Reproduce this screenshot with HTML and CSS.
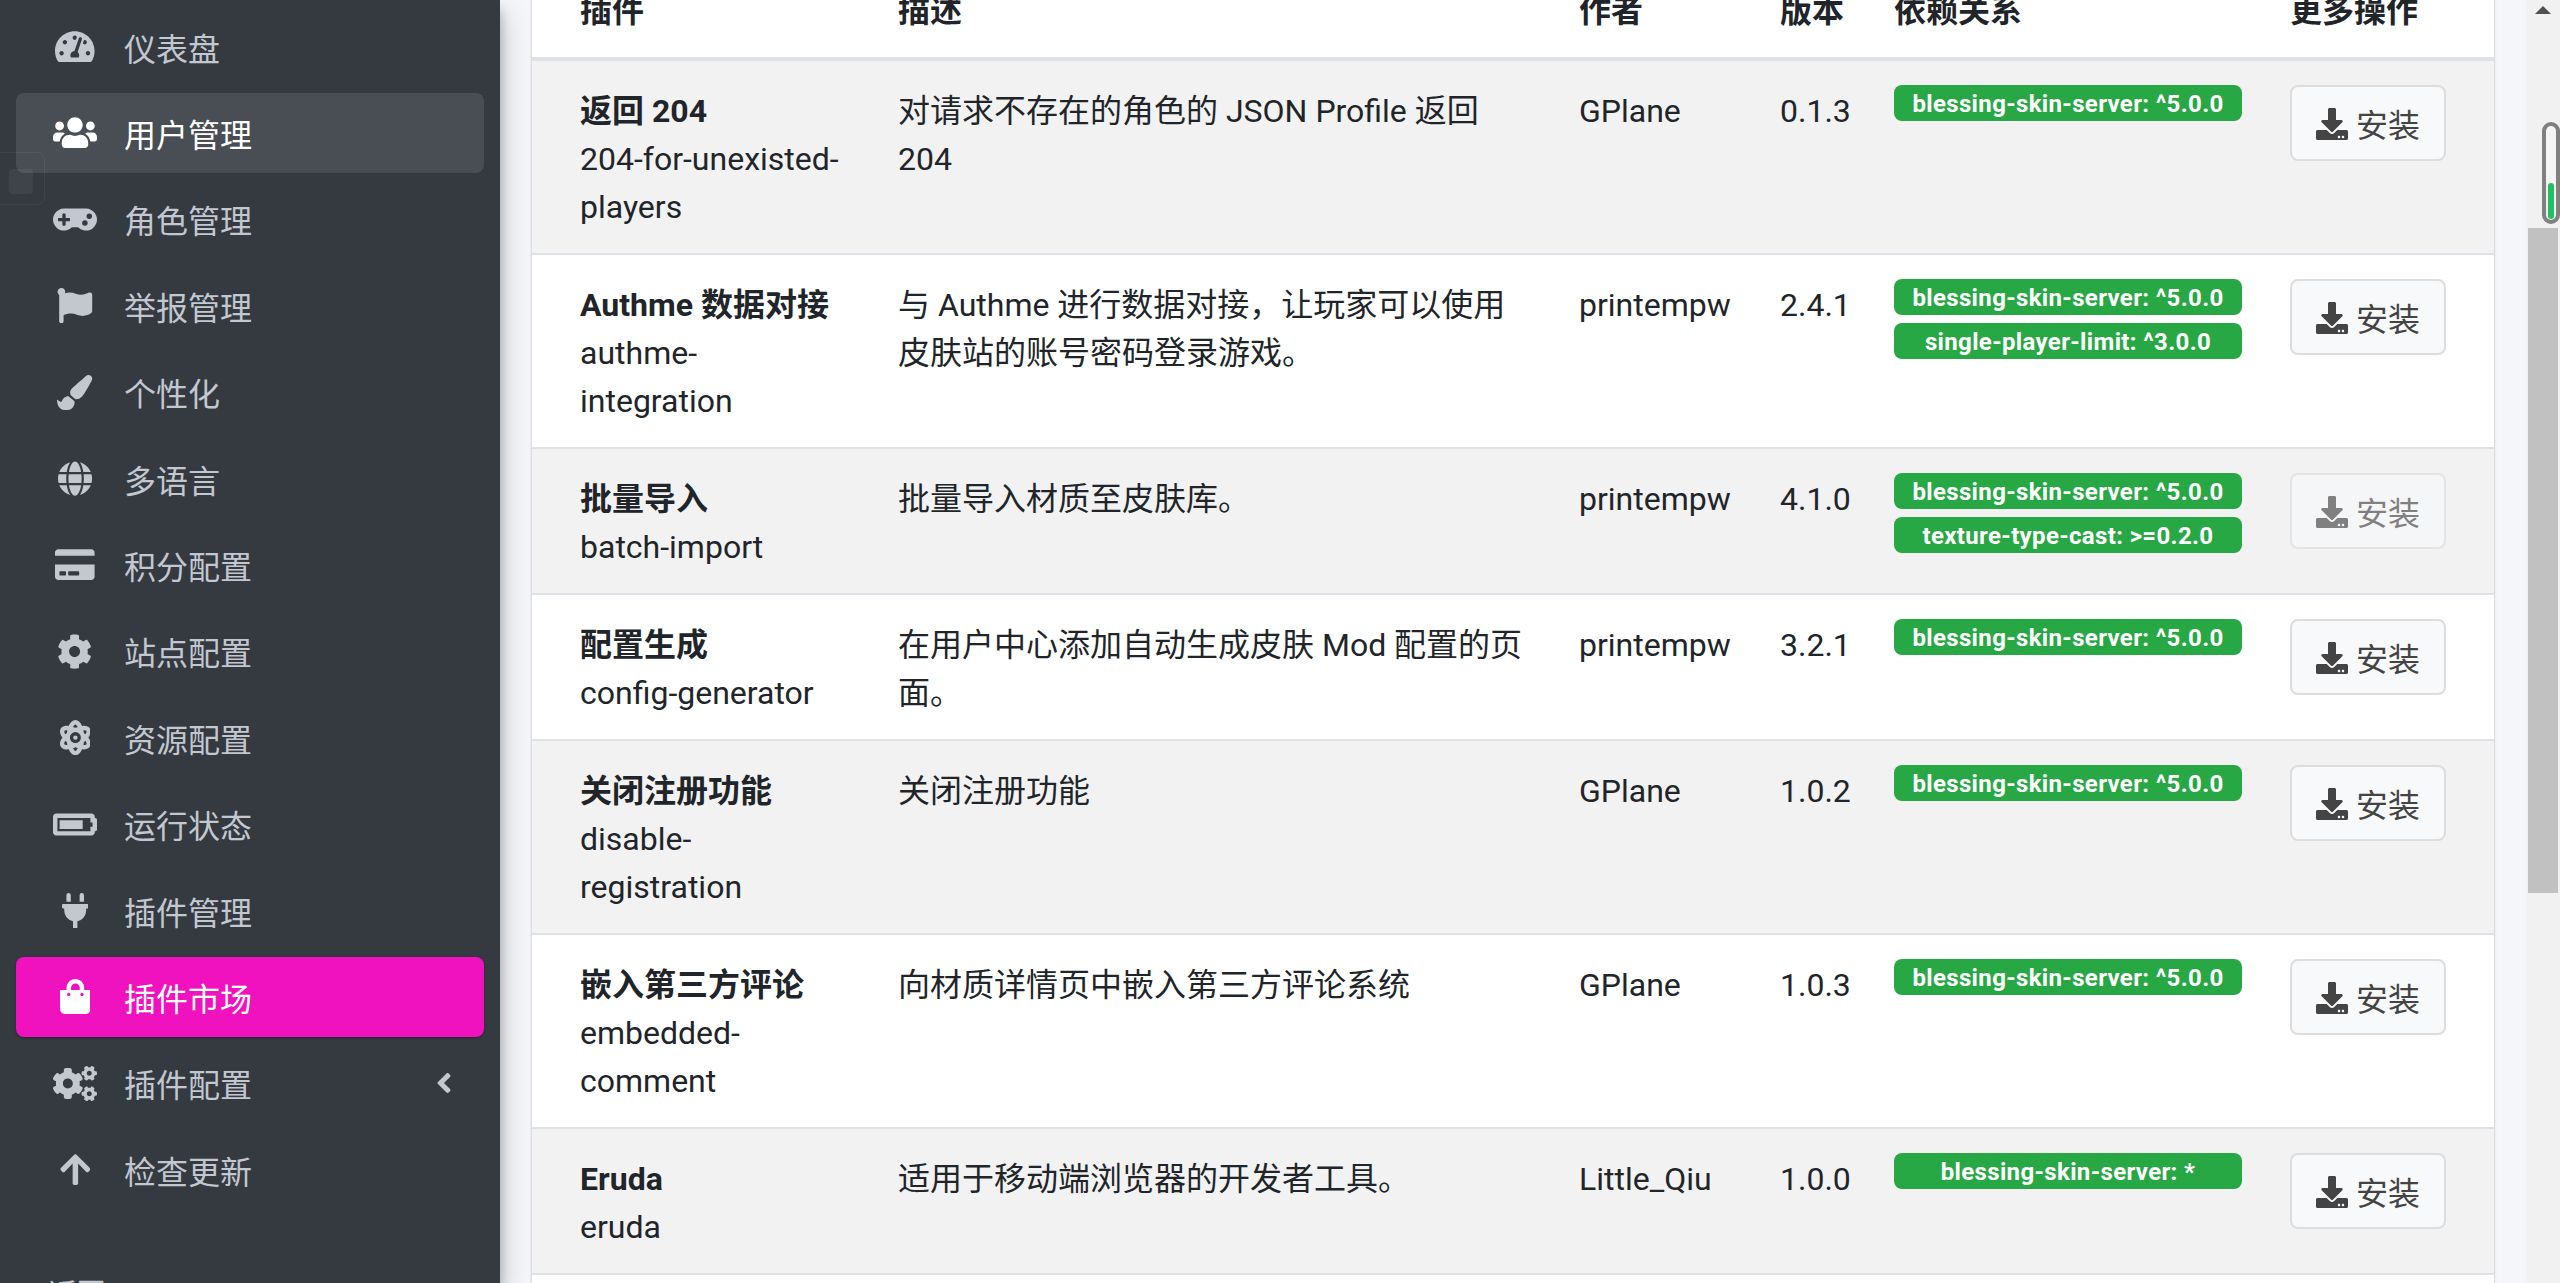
FILE: index.html
```html
<!DOCTYPE html>
<html lang="zh-CN">
<head>
    <meta charset="UTF-8">
    <title>插件市场</title>
    <link rel="stylesheet" href="styles.css">
</head>
<body>
    <svg class="sprite" aria-hidden="true">
        <symbol id="icon-download" viewBox="0 0 512 512"><path d="M216 0h80c13.3 0 24 10.7 24 24v168h87.7c17.8 0 26.7 21.5 14.1 34.1L269.7 378.3c-7.5 7.5-19.8 7.5-27.3 0L90.1 226.1c-12.6-12.6-3.7-34.1 14.1-34.1H192V24c0-13.3 10.7-24 24-24zm296 376v112c0 13.3-10.7 24-24 24H24c-13.3 0-24-10.7-24-24V376c0-13.3 10.7-24 24-24h146.7l49 49c20.1 20.1 52.5 20.1 72.6 0l49-49H488c13.3 0 24 10.7 24 24zm-124 88c0-11-9-20-20-20s-20 9-20 20 9 20 20 20 20-9 20-20zm64 0c0-11-9-20-20-20s-20 9-20 20 9 20 20 20 20-9 20-20z"/></symbol>
    </svg>

    <aside class="sidebar">
        <nav class="nav">
            <a class="nav-link"><span class="nav-icon"><svg viewBox="0 0 576 512"><path d="M288 32C128.94 32 0 160.94 0 320c0 52.8 14.25 102.26 39.06 144.8 5.61 9.62 16.3 15.2 27.44 15.2h443c11.14 0 21.83-5.58 27.44-15.2C561.75 422.26 576 372.8 576 320c0-159.06-128.94-288-288-288zm0 64c14.71 0 26.58 10.13 30.32 23.65-1.11 2.26-2.64 4.23-3.45 6.67l-9.22 27.67c-5.13 3.49-10.97 6.01-17.64 6.01-17.67 0-32-14.33-32-32S270.33 96 288 96zM96 384c-17.67 0-32-14.33-32-32s14.33-32 32-32 32 14.33 32 32-14.33 32-32 32zm48-160c-17.67 0-32-14.33-32-32s14.33-32 32-32 32 14.33 32 32-14.33 32-32 32zm246.77-72.41l-61.33 184C343.13 347.33 352 364.54 352 384c0 11.72-3.38 22.55-8.88 32H232.88c-5.5-9.45-8.88-20.28-8.88-32 0-33.94 26.5-61.43 59.9-63.59l61.34-184.01c4.17-12.56 17.73-19.45 30.36-15.17 12.57 4.19 19.35 17.79 15.17 30.36zm14.66 57.2l15.52-46.55c3.47-1.29 7.13-2.23 11.05-2.23 17.67 0 32 14.33 32 32s-14.33 32-32 32c-11.38-.01-20.89-6.28-26.57-15.22zM480 384c-17.67 0-32-14.33-32-32s14.33-32 32-32 32 14.33 32 32-14.33 32-32 32z"/></svg></span>仪表盘</a>
            <a class="nav-link hover"><span class="nav-icon"><svg viewBox="0 0 640 512"><path d="M96 224c35.3 0 64-28.7 64-64s-28.7-64-64-64-64 28.7-64 64 28.7 64 64 64zm448 0c35.3 0 64-28.7 64-64s-28.7-64-64-64-64 28.7-64 64 28.7 64 64 64zm32 32h-64c-17.6 0-33.5 7.1-45.1 18.6 40.3 22.1 68.9 62 75.1 109.4h66c17.7 0 32-14.3 32-32v-32c0-35.3-28.7-64-64-64zm-256 0c61.9 0 112-50.1 112-112S381.9 32 320 32 208 82.1 208 144s50.1 112 112 112zm76.8 32h-8.3c-20.8 10-43.9 16-68.5 16s-47.6-6-68.5-16h-8.3C179.6 288 128 339.6 128 403.2V432c0 26.5 21.5 48 48 48h288c26.5 0 48-21.5 48-48v-28.8c0-63.6-51.6-115.2-115.2-115.2zm-223.7-13.4C161.5 263.1 145.6 256 128 256H64c-35.3 0-64 28.7-64 64v32c0 17.7 14.3 32 32 32h65.9c6.3-47.4 34.9-87.3 75.2-109.4z"/></svg></span>用户管理</a>
            <a class="nav-link"><span class="nav-icon"><svg viewBox="0 0 640 512"><path d="M480.07 96H160a160 160 0 1 0 114.24 272h91.52A160 160 0 1 0 480.07 96zM248 268a12 12 0 0 1-12 12h-52v52a12 12 0 0 1-12 12h-24a12 12 0 0 1-12-12v-52H84a12 12 0 0 1-12-12v-24a12 12 0 0 1 12-12h52v-52a12 12 0 0 1 12-12h24a12 12 0 0 1 12 12v52h52a12 12 0 0 1 12 12zm216 76a40 40 0 1 1 40-40 40 40 0 0 1-40 40zm64-96a40 40 0 1 1 40-40 40 40 0 0 1-40 40z"/></svg></span>角色管理</a>
            <a class="nav-link"><span class="nav-icon"><svg viewBox="0 0 512 512"><path d="M349.565 98.783C295.978 98.783 251.721 64 184.348 64c-24.955 0-47.309 4.384-68.045 12.013a55.947 55.947 0 0 0 3.586-23.562C118.117 24.015 94.806 1.206 66.338.048 34.345-1.254 8 24.296 8 56c0 19.026 9.497 35.825 24 45.945V488c0 13.255 10.745 24 24 24h16c13.255 0 24-10.745 24-24v-94.4c28.311-12.064 63.582-22.122 114.435-22.122 53.588 0 97.844 34.783 165.217 34.783 48.169 0 86.667-16.294 122.505-40.858C506.84 359.452 512 349.571 512 339.045v-243.1c0-23.393-24.269-38.87-45.485-29.016-34.338 15.948-76.454 31.854-116.95 31.854z"/></svg></span>举报管理</a>
            <a class="nav-link"><span class="nav-icon"><svg viewBox="0 0 512 512"><path d="M167.02 309.34c-40.12 2.58-76.53 17.86-97.19 72.3-2.35 6.21-8 9.98-14.59 9.98-11.11 0-45.46-27.67-55.25-34.35C0 439.62 37.93 512 128 512c75.86 0 128-43.77 128-120.19 0-3.11-.65-6.08-.97-9.13l-88.01-73.34zM457.89 0c-15.16 0-29.37 6.71-40.21 16.45C213.27 199.05 192 203.34 192 257.09c0 13.7 3.25 26.76 8.73 38.7l63.82 53.18c7.21 1.8 14.64 3.03 22.39 3.03 62.11 0 98.11-45.47 211.16-256.46 7.38-14.35 13.9-29.85 13.9-45.99C512 20.64 486 0 457.89 0z"/></svg></span>个性化</a>
            <a class="nav-link"><span class="nav-icon"><svg viewBox="0 0 496 512"><path d="M336.5 160C322 70.7 287.8 8 248 8s-74 62.7-88.5 152h177zM152 256c0 22.2 1.2 43.5 3.3 64h185.3c2.1-20.5 3.3-41.8 3.3-64s-1.2-43.5-3.3-64H155.3c-2.1 20.5-3.3 41.8-3.3 64zm324.7-96c-28.6-67.9-86.5-120.4-158-141.6 24.4 33.8 41.2 84.7 50 141.6h108zM177.2 18.4C105.8 39.6 47.8 92.1 19.3 160h108c8.7-56.9 25.5-107.8 49.9-141.6zM487.4 192H372.7c2.1 21 3.3 42.5 3.3 64s-1.2 43-3.3 64h114.6c5.5-20.5 8.6-41.8 8.6-64s-3.1-43.5-8.5-64zM120 256c0-21.5 1.2-43 3.3-64H8.6C3.2 212.5 0 233.8 0 256s3.2 43.5 8.6 64h114.6c-2-21-3.2-42.5-3.2-64zm39.5 96c14.5 89.3 48.7 152 88.5 152s74-62.7 88.5-152h-177zm159.3 141.6c71.4-21.2 129.4-73.7 158-141.6h-108c-8.8 56.9-25.6 107.8-50 141.6zM19.3 352c28.6 67.9 86.5 120.4 158 141.6-24.4-33.8-41.2-84.7-50-141.6h-108z"/></svg></span>多语言</a>
            <a class="nav-link"><span class="nav-icon"><svg viewBox="0 0 576 512"><path d="M0 432c0 26.5 21.5 48 48 48h480c26.5 0 48-21.5 48-48V256H0v176zm192-68c0-6.6 5.4-12 12-12h136c6.6 0 12 5.4 12 12v40c0 6.6-5.4 12-12 12H204c-6.6 0-12-5.4-12-12v-40zm-128 0c0-6.6 5.4-12 12-12h72c6.6 0 12 5.4 12 12v40c0 6.6-5.4 12-12 12H76c-6.6 0-12-5.4-12-12v-40zM576 80v48H0V80c0-26.5 21.5-48 48-48h480c26.5 0 48 21.5 48 48z"/></svg></span>积分配置</a>
            <a class="nav-link"><span class="nav-icon"><svg viewBox="0 0 512 512"><path d="M487.4 315.7l-42.6-24.6c4.3-23.2 4.3-47 0-70.2l42.6-24.6c4.9-2.8 7.1-8.6 5.5-14-11.1-35.6-30-67.8-54.7-94.6-3.8-4.1-10-5.1-14.8-2.3L380.8 110c-17.9-15.4-38.5-27.3-60.8-35.1V25.8c0-5.6-3.9-10.5-9.4-11.7-36.7-8.2-74.3-7.8-109.2 0-5.5 1.2-9.4 6.1-9.4 11.7V75c-22.2 7.9-42.8 19.8-60.8 35.1L88.7 85.5c-4.9-2.8-11-1.9-14.8 2.3-24.7 26.7-43.6 58.9-54.7 94.6-1.7 5.4.6 11.2 5.5 14L67.3 221c-4.3 23.2-4.3 47 0 70.2l-42.6 24.6c-4.9 2.8-7.1 8.6-5.5 14 11.1 35.6 30 67.8 54.7 94.6 3.8 4.1 10 5.1 14.8 2.3l42.6-24.6c17.9 15.4 38.5 27.3 60.8 35.1v49.2c0 5.6 3.9 10.5 9.4 11.7 36.7 8.2 74.3 7.8 109.2 0 5.5-1.2 9.4-6.1 9.4-11.7v-49.2c22.2-7.9 42.8-19.8 60.8-35.1l42.6 24.6c4.9 2.8 11 1.9 14.8-2.3 24.7-26.7 43.6-58.9 54.7-94.6 1.5-5.5-.7-11.3-5.6-14.1zM256 336c-44.1 0-80-35.9-80-80s35.9-80 80-80 80 35.9 80 80-35.9 80-80 80z"/></svg></span>站点配置</a>
            <a class="nav-link"><span class="nav-icon"><svg viewBox="0 0 448 512"><path d="M223.99908,224a32,32,0,1,0,32.00782,32A32.06431,32.06431,0,0,0,223.99908,224Zm214.172-96c-10.877-19.5-40.50979-50.75-116.27544-41.875C300.39168,34.875,267.63386,0,223.99908,0s-76.39066,34.875-97.89653,86.125C50.3369,77.375,20.706,108.5,9.82907,128-6.54984,157.375-5.17484,201.125,34.958,256-5.17484,310.875-6.54984,354.625,9.82907,384c29.13087,52.375,101.61922,43.625,116.27543,41.875C147.60859,477.125,180.36641,512,223.99908,512s76.3926-34.875,97.89652-86.125c14.658,1.75,87.14456,10.5,116.27544-41.875C454.55,354.625,453.175,310.875,413.04017,256,453.175,201.125,454.55,157.375,438.171,128ZM63.33886,352c-4-7.25-.125-24.75,15.00391-48.25,6.87695,6.5,14.12891,12.875,21.88087,19.125,1.625,13.75,4,27.125,6.75,40.125C82.34472,363.875,67.09081,358.875,63.33886,352Zm36.88478-162.875c-7.752,6.25-15.00392,12.625-21.88087,19.125-15.12891-23.5-19.00392-41-15.00391-48.25,3.377-6.125,16.37891-11.5,37.88478-11.5,1.75,0,3.875.375,5.75.375C104.09864,162.25,101.84864,175.625,100.22364,189.125ZM223.99908,64c9.50195,0,22.25586,13.5,33.88282,37.25-11.252,3.75-22.50391,8-33.88282,12.875-11.377-4.875-22.62892-9.125-33.88283-12.875C201.74516,77.5,214.49712,64,223.99908,64Zm0,384c-9.502,0-22.25392-13.5-33.88283-37.25,11.25391-3.75,22.50587-8,33.88283-12.875C235.378,402.75,246.62994,407,257.8819,410.75,246.25494,434.5,233.501,448,223.99908,448Zm0-112a80,80,0,1,1,80-80A80.00023,80.00023,0,0,1,223.99908,336ZM384.6593,352c-3.625,6.875-19.00392,11.875-43.63479,11,2.75-13,5.125-26.375,6.75-40.125,7.75195-6.25,15.00391-12.625,21.87891-19.125C384.7843,327.25,388.6593,344.75,384.6593,352ZM369.65538,208.25c-6.875-6.5-14.127-12.875-21.87891-19.125-1.625-13.5-3.875-26.875-6.75-40.25,1.875,0,4.002-.375,5.75-.375,21.50391,0,34.50782,5.375,37.88283,11.5C388.6593,167.25,384.7843,184.75,369.65538,208.25Z"/></svg></span>资源配置</a>
            <a class="nav-link"><span class="nav-icon"><svg viewBox="0 0 640 512"><path d="M544 160v64h32v64h-32v64H64V160h480m16-64H48c-26.51 0-48 21.49-48 48v224c0 26.51 21.49 48 48 48h512c26.51 0 48-21.49 48-48v-16h8c13.255 0 24-10.745 24-24V184c0-13.255-10.745-24-24-24h-8v-16c0-26.51-21.49-48-48-48zm-112 96H96v128h336V192z"/></svg></span>运行状态</a>
            <a class="nav-link"><span class="nav-icon"><svg viewBox="0 0 384 512"><path d="M320,32a32,32,0,0,0-64,0v96h64Zm48,128H16A16,16,0,0,0,0,176v32a16,16,0,0,0,16,16H32v32A160.07,160.07,0,0,0,160,412.8V512h64V412.8A160.07,160.07,0,0,0,352,256V224h16a16,16,0,0,0,16-16V176A16,16,0,0,0,368,160ZM128,32a32,32,0,0,0-64,0v96h64Z"/></svg></span>插件管理</a>
            <a class="nav-link active"><span class="nav-icon"><svg viewBox="0 0 448 512"><path d="M352 160v-32C352 57.42 294.579 0 224 0 153.42 0 96 57.42 96 128v32H0v272c0 44.183 35.817 80 80 80h288c44.183 0 80-35.817 80-80V160h-96zm-192-32c0-35.29 28.71-64 64-64s64 28.71 64 64v32H160v-32zm160 120c-13.255 0-24-10.745-24-24s10.745-24 24-24 24 10.745 24 24-10.745 24-24 24zm-192 0c-13.255 0-24-10.745-24-24s10.745-24 24-24 24 10.745 24 24-10.745 24-24 24z"/></svg></span>插件市场</a>
            <a class="nav-link"><span class="nav-icon"><svg viewBox="0 0 640 512"><path d="M512.1 191l-8.2 14.3c-3 5.3-9.4 7.5-15.1 5.4-11.8-4.4-22.6-10.7-32.1-18.6-4.6-3.8-5.8-10.5-2.8-15.7l8.2-14.3c-6.9-8-12.3-17.3-15.9-27.4h-16.5c-6 0-11.2-4.3-12.2-10.3-2-12-2.1-24.6 0-37.1 1-6 6.2-10.4 12.2-10.4h16.5c3.6-10.1 9-19.4 15.9-27.4l-8.2-14.3c-3-5.2-1.9-11.9 2.8-15.7 9.5-7.9 20.4-14.2 32.1-18.6 5.7-2.1 12.1.1 15.1 5.4l8.2 14.3c10.5-1.9 21.2-1.9 31.7 0L552 6.3c3-5.3 9.4-7.5 15.1-5.4 11.8 4.4 22.6 10.7 32.1 18.6 4.6 3.8 5.8 10.5 2.8 15.7l-8.2 14.3c6.9 8 12.3 17.3 15.9 27.4h16.5c6 0 11.2 4.3 12.2 10.3 2 12 2.1 24.6 0 37.1-1 6-6.2 10.4-12.2 10.4h-16.5c-3.6 10.1-9 19.4-15.9 27.4l8.2 14.3c3 5.2 1.9 11.9-2.8 15.7-9.5 7.9-20.4 14.2-32.1 18.6-5.7 2.1-12.1-.1-15.1-5.4l-8.2-14.3c-10.4 1.9-21.2 1.9-31.7 0zm-10.5-58.8c38.5 29.6 82.4-14.3 52.8-52.8-38.5-29.7-82.4 14.3-52.8 52.8zM386.3 286.1l33.7 16.8c10.1 5.8 14.5 18.1 10.5 29.1-8.9 24.2-26.4 46.4-42.6 65.8-7.4 8.9-20.2 11.1-30.3 5.3l-29.1-16.8c-16 13.7-34.6 24.6-54.9 31.7v33.6c0 11.6-8.3 21.6-19.7 23.6-24.6 4.2-50.4 4.4-75.9 0-11.5-2-20-11.9-20-23.6V418c-20.3-7.2-38.9-18-54.9-31.7L74 403c-10 5.8-22.9 3.6-30.3-5.3-16.2-19.4-33.3-41.6-42.2-65.7-4-10.9.4-23.2 10.5-29.1l33.3-16.8c-3.9-20.9-3.9-42.4 0-63.4L12 205.8c-10.1-5.8-14.6-18.1-10.5-29 8.9-24.2 26-46.4 42.2-65.8 7.4-8.9 20.2-11.1 30.3-5.3l29.1 16.8c16-13.7 34.6-24.6 54.9-31.7V57.1c0-11.5 8.2-21.5 19.6-23.5 24.6-4.2 50.5-4.4 76-.1 11.5 2 20 11.9 20 23.6v33.6c20.3 7.2 38.9 18 54.9 31.7l29.1-16.8c10-5.8 22.9-3.6 30.3 5.3 16.2 19.4 33.2 41.6 42.1 65.8 4 10.9.1 23.2-10 29.1l-33.7 16.8c3.9 21 3.9 42.5 0 63.5zm-117.6 21.1c59.2-77-28.7-164.9-105.7-105.7-59.2 77 28.7 164.9 105.7 105.7zm243.4 182.7l-8.2 14.3c-3 5.3-9.4 7.5-15.1 5.4-11.8-4.4-22.6-10.7-32.1-18.6-4.6-3.8-5.8-10.5-2.8-15.7l8.2-14.3c-6.9-8-12.3-17.3-15.9-27.4h-16.5c-6 0-11.2-4.3-12.2-10.3-2-12-2.1-24.6 0-37.1 1-6 6.2-10.4 12.2-10.4h16.5c3.6-10.1 9-19.4 15.9-27.4l-8.2-14.3c-3-5.2-1.9-11.9 2.8-15.7 9.5-7.9 20.4-14.2 32.1-18.6 5.7-2.1 12.1.1 15.1 5.4l8.2 14.3c10.5-1.9 21.2-1.9 31.7 0l8.2-14.3c3-5.3 9.4-7.5 15.1-5.4 11.8 4.4 22.6 10.7 32.1 18.6 4.6 3.8 5.8 10.5 2.8 15.7l-8.2 14.3c6.9 8 12.3 17.3 15.9 27.4h16.5c6 0 11.2 4.3 12.2 10.3 2 12 2.1 24.6 0 37.1-1 6-6.2 10.4-12.2 10.4h-16.5c-3.6 10.1-9 19.4-15.9 27.4l8.2 14.3c3 5.2 1.9 11.9-2.8 15.7-9.5 7.9-20.4 14.2-32.1 18.6-5.7 2.1-12.1-.1-15.1-5.4l-8.2-14.3c-10.4 1.9-21.2 1.9-31.7 0zM501.6 431c38.5 29.6 82.4-14.3 52.8-52.8-38.5-29.6-82.4 14.3-52.8 52.8z"/></svg></span>插件配置<svg class="nav-arrow" viewBox="0 0 256 512"><path d="M31.7 239l136-136c9.4-9.4 24.6-9.4 33.9 0l22.6 22.6c9.4 9.4 9.4 24.6 0 33.9L127.9 256l96.4 96.4c9.4 9.4 9.4 24.6 0 33.9L201.7 409c-9.4 9.4-24.6 9.4-33.9 0l-136-136c-9.5-9.4-9.5-24.6-.1-34z"/></svg></a>
            <a class="nav-link"><span class="nav-icon"><svg viewBox="0 0 448 512"><path d="M34.9 289.5l-22.2-22.2c-9.4-9.4-9.4-24.6 0-33.9L207 39c9.4-9.4 24.6-9.4 33.9 0l194.3 194.3c9.4 9.4 9.4 24.6 0 33.9L413 289.4c-9.5 9.5-25 9.3-34.3-.4L264 168.6V456c0 13.3-10.7 24-24 24h-32c-13.3 0-24-10.7-24-24V168.6L69.2 289.1c-9.3 9.8-24.8 10-34.3.4z"/></svg></span>检查更新</a>
            <div class="nav-header">返回</div>
        </nav>
    </aside>

    <main class="content">
        <div class="card">
            <table class="plugins">
                <colgroup>
                    <col class="col-name">
                    <col class="col-desc">
                    <col class="col-author">
                    <col class="col-version">
                    <col class="col-deps">
                    <col class="col-actions">
                </colgroup>
                <thead>
                    <tr>
                        <th>插件</th>
                        <th>描述</th>
                        <th>作者</th>
                        <th>版本</th>
                        <th>依赖关系</th>
                        <th>更多操作</th>
                    </tr>
                </thead>
                <tbody>
                    <tr>
                        <td><strong>返回 204</strong><div>204-for-unexisted-players</div></td>
                        <td>对请求不存在的角色的 JSON Profile 返回 204</td>
                        <td>GPlane</td>
                        <td>0.1.3</td>
                        <td class="cell-control"><span class="badge">blessing-skin-server: ^5.0.0</span></td>
                        <td class="cell-control"><button class="btn"><svg><use href="#icon-download"/></svg>安装</button></td>
                    </tr>
                    <tr>
                        <td><strong>Authme 数据对接</strong><div>authme-<br>integration</div></td>
                        <td>与 Authme 进行数据对接，让玩家可以使用皮肤站的账号密码登录游戏。</td>
                        <td>printempw</td>
                        <td>2.4.1</td>
                        <td class="cell-control"><span class="badge">blessing-skin-server: ^5.0.0</span><span class="badge">single-player-limit: ^3.0.0</span></td>
                        <td class="cell-control"><button class="btn"><svg><use href="#icon-download"/></svg>安装</button></td>
                    </tr>
                    <tr>
                        <td><strong>批量导入</strong><div>batch-import</div></td>
                        <td>批量导入材质至皮肤库。</td>
                        <td>printempw</td>
                        <td>4.1.0</td>
                        <td class="cell-control"><span class="badge">blessing-skin-server: ^5.0.0</span><span class="badge">texture-type-cast: &gt;=0.2.0</span></td>
                        <td class="cell-control"><button class="btn" disabled><svg><use href="#icon-download"/></svg>安装</button></td>
                    </tr>
                    <tr>
                        <td><strong>配置生成</strong><div>config-generator</div></td>
                        <td>在用户中心添加自动生成皮肤 Mod 配置的页面。</td>
                        <td>printempw</td>
                        <td>3.2.1</td>
                        <td class="cell-control"><span class="badge">blessing-skin-server: ^5.0.0</span></td>
                        <td class="cell-control"><button class="btn"><svg><use href="#icon-download"/></svg>安装</button></td>
                    </tr>
                    <tr>
                        <td><strong>关闭注册功能</strong><div>disable-registration</div></td>
                        <td>关闭注册功能</td>
                        <td>GPlane</td>
                        <td>1.0.2</td>
                        <td class="cell-control"><span class="badge">blessing-skin-server: ^5.0.0</span></td>
                        <td class="cell-control"><button class="btn"><svg><use href="#icon-download"/></svg>安装</button></td>
                    </tr>
                    <tr>
                        <td><strong>嵌入第三方评论</strong><div>embedded-comment</div></td>
                        <td>向材质详情页中嵌入第三方评论系统</td>
                        <td>GPlane</td>
                        <td>1.0.3</td>
                        <td class="cell-control"><span class="badge">blessing-skin-server: ^5.0.0</span></td>
                        <td class="cell-control"><button class="btn"><svg><use href="#icon-download"/></svg>安装</button></td>
                    </tr>
                    <tr>
                        <td><strong>Eruda</strong><div>eruda</div></td>
                        <td>适用于移动端浏览器的开发者工具。</td>
                        <td>Little_Qiu</td>
                        <td>1.0.0</td>
                        <td class="cell-control"><span class="badge">blessing-skin-server: *</span></td>
                        <td class="cell-control"><button class="btn"><svg><use href="#icon-download"/></svg>安装</button></td>
                    </tr>
                    <tr>
                        <td colspan="6">&nbsp;</td>
                    </tr>
                </tbody>
            </table>
        </div>
    </main>

    <div class="scrollbar">
        <div class="scroll-up"></div>
        <div class="scroll-thumb"></div>
    </div>

    <div class="float-widget"><div class="float-widget-dot"></div></div>
    <div class="level-pill"><div class="level-pill-fill"></div></div>
</body>
</html>
```

FILE: styles.css
```css
* {
    box-sizing: border-box;
}

html,
body {
    height: 100%;
}

body {
    margin: 0;
    display: flex;
    overflow: hidden;
    background-color: #f4f6f9;
    color: #212529;
    font-family: Roboto, "Noto Sans CJK SC", sans-serif;
    font-size: 32px;
    line-height: 48px;
}

.sprite {
    display: none;
}

/* sidebar */
.sidebar {
    flex: 0 0 500px;
    height: 100%;
    overflow: hidden;
    padding: 6.6px 16px 0;
    background-color: #343a40;
    box-shadow: 0 14px 28px rgba(0, 0, 0, 0.25), 0 10px 10px rgba(0, 0, 0, 0.22);
    position: relative;
    z-index: 2;
}

.nav-link {
    display: flex;
    align-items: center;
    height: 80px;
    margin-bottom: 6.4px;
    padding: 6px 32px 0;
    border-radius: 8px;
    color: #c2c7d0;
}

.nav-link.hover {
    background-color: rgba(255, 255, 255, 0.1);
    color: #fff;
}

.nav-link.active {
    background-color: #f012be;
    color: #fff;
    box-shadow: 0 1px 3px rgba(0, 0, 0, 0.12), 0 1px 2px rgba(0, 0, 0, 0.24);
}

.nav-icon {
    flex: none;
    display: flex;
    justify-content: center;
    align-items: center;
    width: 54px;
    margin: -6px 22px 0 0;
}

.nav-icon svg {
    display: block;
    height: 35.2px;
    width: auto;
    fill: currentColor;
}

.nav-arrow {
    height: 32px;
    width: 16px;
    margin: -6px 0 0 auto;
    fill: currentColor;
}

.nav-header {
    padding: 54px 32px 16px;
    font-size: 28.8px;
    color: #c2c7d0;
}

/* main content */
.content {
    flex: 1;
    min-width: 0;
    padding: 0 32px;
}

.card {
    margin-top: -39px;
    background-color: #fff;
    box-shadow: 0 0 1px rgba(0, 0, 0, 0.125), 0 1px 3px rgba(0, 0, 0, 0.2);
}

.plugins {
    width: 100%;
    table-layout: fixed;
    border-collapse: separate;
    border-spacing: 0;
}

.col-name { width: 342px; }
.col-desc { width: 681px; }
.col-author { width: 201px; }
.col-version { width: 114px; }
.col-deps { width: 396px; }
.col-actions { width: 228px; }

.plugins th {
    padding: 26px 24px 22px;
    text-align: left;
    font-weight: 700;
    border-bottom: 4px solid #dee2e6;
}

.plugins td {
    padding: 26px 24px 22px;
    vertical-align: top;
    border-bottom: 2px solid #dee2e6;
}

.plugins td.cell-control {
    padding-top: 24px;
    padding-bottom: 24px;
}

.plugins th:first-child,
.plugins td:first-child {
    padding-left: 48px;
}

.plugins th:last-child,
.plugins td:last-child {
    padding-right: 48px;
}

.plugins tbody tr:nth-child(odd) {
    background-color: rgba(0, 0, 0, 0.05);
}

.plugins tbody tr:last-child {
    background-color: transparent;
}

.badge {
    display: block;
    height: 36px;
    margin-bottom: 8px;
    padding-top: 1px;
    border-radius: 8px;
    background-color: #28a745;
    color: #fff;
    font-size: 24px;
    font-weight: 700;
    letter-spacing: 0.35px;
    line-height: 36px;
    text-align: center;
    white-space: nowrap;
}

.btn {
    display: inline-flex;
    align-items: center;
    gap: 8px;
    height: 76px;
    padding: 5px 24px 0;
    border: 2px solid #ddd;
    border-radius: 8px;
    background-color: #f8f9fa;
    color: #444;
    font: inherit;
}

.btn svg {
    width: 32px;
    height: 32px;
    margin-top: -3px;
    fill: currentColor;
}

.btn:disabled {
    opacity: 0.65;
}

/* page scrollbar */
.scrollbar {
    flex: 0 0 34px;
    padding: 0 2px;
    background-color: #f1f1f1;
}

.scroll-up {
    height: 20px;
    padding-top: 6px;
}

.scroll-up::before {
    content: "";
    display: block;
    width: 0;
    margin: 0 auto;
    border-left: 8px solid transparent;
    border-right: 8px solid transparent;
    border-bottom: 8px solid #505050;
}

.scroll-thumb {
    height: 665px;
    margin-top: 208px;
    background-color: #c1c1c1;
}

/* things floating above the page */
.float-widget {
    position: absolute;
    left: -8px;
    top: 152px;
    width: 53px;
    height: 53px;
    padding: 16px 0 0 16px;
    border: 1px solid rgba(255, 255, 255, 0.05);
    border-radius: 8px;
    z-index: 3;
}

.float-widget-dot {
    width: 24px;
    height: 25px;
    border-radius: 4px;
    background-color: rgba(255, 255, 255, 0.05);
}

.level-pill {
    position: absolute;
    right: 0;
    top: 122px;
    width: 18px;
    height: 102px;
    display: flex;
    align-items: flex-end;
    justify-content: center;
    padding-bottom: 1px;
    border: 4px solid #808080;
    border-radius: 9px;
    background-color: #f4f4f4;
}

.level-pill-fill {
    width: 6px;
    height: 36px;
    border-radius: 3px;
    background-color: #22c063;
}
```
